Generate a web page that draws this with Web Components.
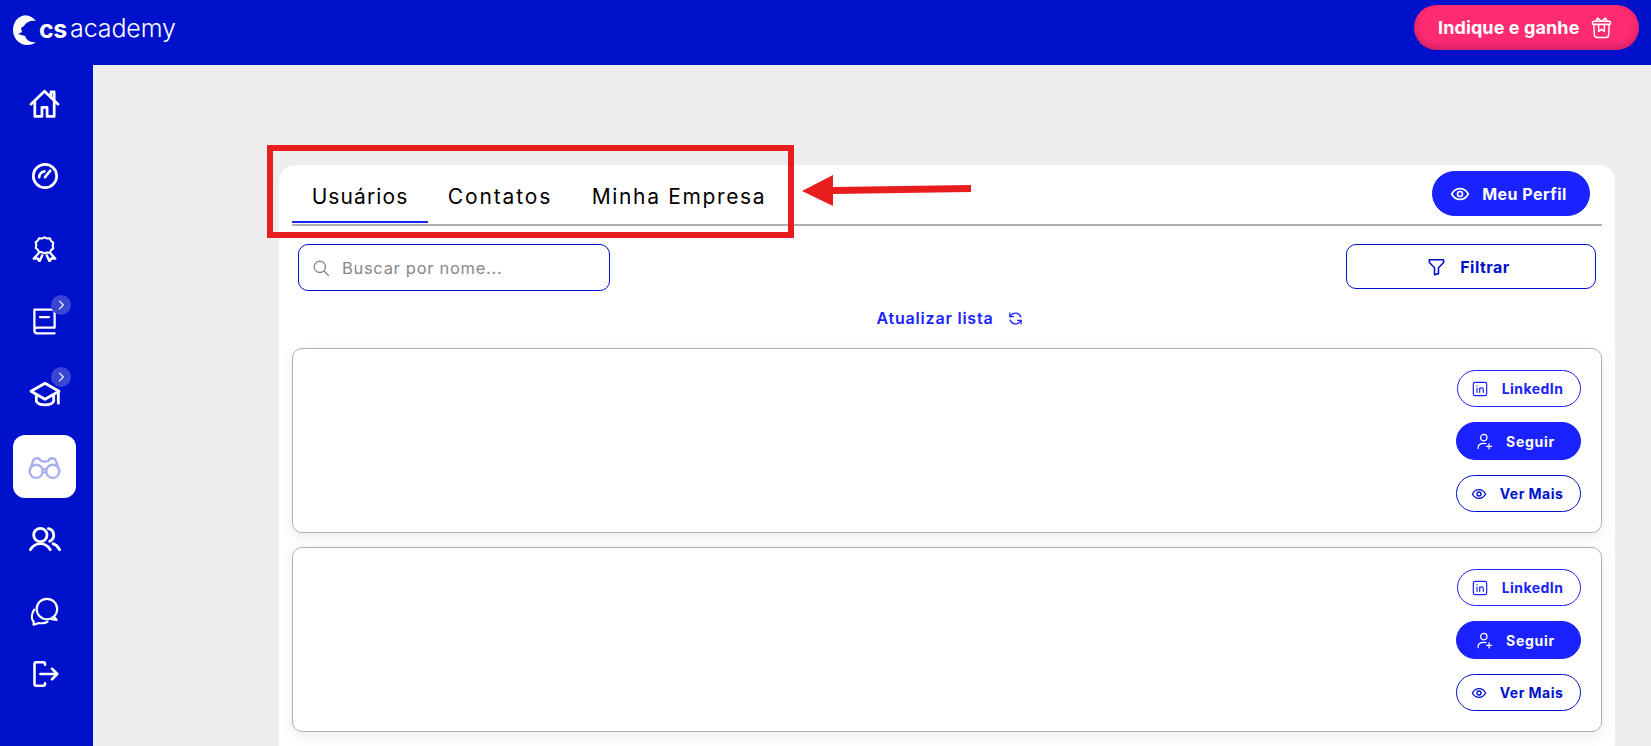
<!DOCTYPE html>
<html lang="pt-BR">
<head>
<meta charset="utf-8">
<title>CS Academy</title>
<style>
  html, body { margin: 0; height: 100%; overflow: hidden; background: #eee; font-family: Inter, "Noto Sans", sans-serif; }
</style>
</head>
<body>
<app-shell>
  <top-bar slot="top"></top-bar>
  <side-bar slot="side"></side-bar>
  <network-panel></network-panel>
</app-shell>
<arrow-note></arrow-note>

<script>
'use strict'

// shared icon paths, all drawn on a 24 box
const ICONS = {
  home: '<path d="M1.5 12.5 12 2.5l10.5 10"/><path d="M17 7V3h2.5v6.5"/><path d="M4.5 10.5V22h5.5v-7h4v7h5.5V10.5"/>',
  gauge: '<circle cx="12" cy="12" r="10"/><path d="M12 13l4.5-5.5"/><path d="M7 13a5.2 5.2 0 0 1 4.5-5"/>',
  ribbon: '<path d="M12 2l2.6 1.2 2.8-.2 1.2 2.6 2.2 1.8-.6 2.8.6 2.8-2.2 1.8-1.2 2.6-2.8-.2L12 18l-2.6-1.2-2.8.2-1.2-2.6L3.2 12.600l.6-2.800-.6-2.800 2.200-1.800L6.600 3l2.800.2z" transform="translate(1.300 .3) scale(.89)"/><path d="M6.500 16.500 2.500 21l3.500-.2 1.500 2.700 2.500-5.500"/><path d="M17.500 16.500l4 4.500-3.500-.2-1.500 2.700-2.500-5.500"/>',
  book: '<path d="M3 20V1.500h18V17.500H5.500a2.500 2.500 0 0 0 0 5H21"/><path d="M8 8h8"/>',
  grad: '<path d="M12 4 1.500 10 12 16l10.500-6z"/><path d="M5.500 12.500v5c2 3.500 11 3.500 13 0v-5"/><path d="M22 10v9"/>',
  binoculars: '<circle cx="6" cy="15.500" r="4.800"/><circle cx="18" cy="15.500" r="4.800"/><circle cx="12" cy="15" r="1.300"/><path d="M1.200 15 3.500 8.500Q4 6 6.500 6 8.500 6 9 7.800 12 9 15 7.800 15.500 6 17.500 6 20 6 20.500 8.500L22.800 15"/>',
  people: '<circle cx="8.500" cy="9" r="5"/><path d="M1 20c2-3 4.500-4.500 7.500-4.500s5.500 1.500 7.500 4.500"/><path d="M14.500 4.200a5 5 0 0 1 1 9.500"/><path d="M18 15.500c2 .6 3.800 2.500 5 4.500"/>',
  chat: '<circle cx="14" cy="10" r="8.500"/><path d="M20 16.500l2 2.500-5-.8"/><path d="M3.500 10.500C1 14 1 18 3 20.500V23l4.500-1.500c2.500.500 5 .2 7-1"/>',
  logout: '<path d="M12 4V3.500A1.500 1.500 0 0 0 10.500 2H4.500A1.500 1.500 0 0 0 3 3.500v17A1.500 1.500 0 0 0 4.500 22h6a1.500 1.500 0 0 0 1.500-1.500V20"/><path d="M8 12h14"/><path d="M18 7.500 22.500 12 18 16.500"/>',
  gift: '<path d="M4 8.500h16l-.5 11a3 3 0 0 1-3 3h-9a3 3 0 0 1-3-3z"/><rect x="2.500" y="5.500" width="19" height="3.500" rx="1.700"/><path d="M9 9v7l3-2 3 2V9"/><path d="M6 5.500 8 2l4 3.500L16 2l2 3.500"/>',
  eye: '<path d="M2 12c2.500-4.500 6-6.500 10-6.500S19.500 7.500 22 12c-2.500 4.500-6 6.500-10 6.500S4.500 16.500 2 12z"/><circle cx="12" cy="12" r="3"/>',
  search: '<circle cx="10.500" cy="10.500" r="7.500"/><path d="M16 16l6 6"/>',
  funnel: '<path d="M3 3.500h18v3.500l-6.500 6.500v7.500l-5 1.500v-9L3 7z"/>',
  refresh: '<path d="M20.500 9.500A9 9 0 0 0 5 6.500L3 9"/><path d="M3 3.500V9h5.500"/><path d="M3.500 14.500A9 9 0 0 0 19 17.500l2-2.500"/><path d="M21 20.500V15h-5.500"/>',
  linkedin: '<rect x="2" y="2" width="20" height="20" rx="2.500"/><path d="M7.500 10.500V17M7.500 6.800v.4M11.500 17v-6.500M11.500 13c0-3.500 5.500-3.500 5.500 0v4"/>',
  follow: '<circle cx="11" cy="6.500" r="4.500"/><path d="M3 22v-1.500c0-3.500 3-6 8-6 1 0 2 .1 3 .4"/><path d="M18.500 15.500v7M15 19h7"/>',
  chevron: '<path d="M9.500 5.500 16 12l-6.500 6.500"/>'
}

class CsIcon extends HTMLElement {
  connectedCallback() {
    const size = this.getAttribute('size') || 24
    const sw = this.getAttribute('stroke') || 2
    this.attachShadow({ mode: 'open' }).innerHTML = `
      <style>
        :host { display: inline-flex; width: ${size}px; height: ${size}px; flex: none; }
        svg { width: 100%; height: 100%; fill: none; stroke: currentColor; stroke-width: ${sw}; stroke-linecap: round; stroke-linejoin: round; }
      </style>
      <svg viewBox="0 0 24 24">${ICONS[this.getAttribute('name')]}</svg>`
  }
}

class AppShell extends HTMLElement {
  constructor() {
    super()
    this.attachShadow({ mode: 'open' }).innerHTML = `
      <style>
        :host { display: grid; grid-template: 65px 681px / 93px 1fr; height: 746px; overflow: hidden; }
        .top { grid-column: 1 / 3; }
        main { padding: 100px 36px 0 186px; min-width: 0; overflow: hidden; }
      </style>
      <div class="top"><slot name="top"></slot></div>
      <div><slot name="side"></slot></div>
      <main><slot></slot></main>`
  }
}

class TopBar extends HTMLElement {
  constructor() {
    super()
    this.attachShadow({ mode: 'open' }).innerHTML = `
      <style>
        :host { display: flex; height: 65px; background: #0011cc; align-items: center; justify-content: space-between; padding: 0 12px 0 13px; color: #fff; }
        .logo { display: flex; align-items: center; margin-top: -8px; }
        .logo svg { width: 24px; height: 30px; fill: #fff; margin-right: 2px; margin-top: 2px; }
        .cs { font-size: 25px; font-weight: 700; letter-spacing: -.5px; width: 31px; }
        .academy { font-size: 25px; font-weight: 300; letter-spacing: -.1px; margin-top: -2px; }
        .invite { display: flex; align-items: center; gap: 11px; box-sizing: border-box; width: 225px; height: 45px; margin-top: -10px; padding-left: 24px; border-radius: 23px; background: #ff2b72; box-shadow: inset 0 -4px 7px rgba(150, 20, 90, .45); font-size: 18px; font-weight: 650; letter-spacing: .1px; }
      </style>
      <div class="logo">
        <svg viewBox="13 13 24 30"><path d="M36 19C32 14 26 12 22 14 16 16 13 22 13 28c0 8 6 15 14 15 4 0 7-1 9-3-5 1-9-1-11-6l-7-2 4-2-1-4 3-2c2-4 7-6 12-5z"/></svg>
        <span class="cs">cs</span><span class="academy">academy</span>
      </div>
      <div class="invite">Indique e ganhe <cs-icon name="gift" size="23" stroke="1.500"></cs-icon></div>`
  }
}

class NavItem extends HTMLElement {
  constructor() {
    super()
    const active = this.hasAttribute('active')
    const badge = this.hasAttribute('badge') ? '<span class="badge"><cs-icon name="chevron" size="14" stroke="2"></cs-icon></span>' : ''
    this.attachShadow({ mode: 'open' }).innerHTML = `
      <style>
        :host { display: flex; position: relative; width: 63px; height: 63px; align-items: center; justify-content: center; border-radius: 12px; color: #fff; ${active ? 'background: #fff; color: #a9b0ee;' : ''} }
        .badge { position: absolute; top: 5px; right: 5px; width: 20px; height: 20px; border-radius: 50%; background: #3a45d2; display: flex; align-items: center; justify-content: center; color: #fff; }
      </style>
      <cs-icon name="${this.getAttribute('icon')}" size="${this.getAttribute('size') || 30}" stroke="${this.getAttribute('stroke') || 2.100}"></cs-icon>${badge}`
  }
}

class SideBar extends HTMLElement {
  constructor() {
    super()
    this.attachShadow({ mode: 'open' }).innerHTML = `
      <style>
        :host { display: flex; flex-direction: column; align-items: flex-start; gap: 9.600px; box-sizing: border-box; width: 93px; height: 681px; padding: 7px 0 0 13px; background: #0011cc; }
        .last { margin-top: -10px; }
      </style>
      <nav-item icon="home" size="31"></nav-item>
      <nav-item icon="gauge" size="28" stroke="2.300"></nav-item>
      <nav-item icon="ribbon" size="27"></nav-item>
      <nav-item icon="book" size="27" stroke="2" badge></nav-item>
      <nav-item icon="grad" size="32" badge></nav-item>
      <nav-item icon="binoculars" size="33" stroke="1.700" active></nav-item>
      <nav-item icon="people" size="32" stroke="2.100"></nav-item>
      <nav-item icon="chat" size="29" stroke="1.800"></nav-item>
      <nav-item icon="logout" size="28" stroke="2.200" class="last"></nav-item>`
  }
}

class PillButton extends HTMLElement {
  constructor() {
    super()
    const icon = this.getAttribute('icon')
    const gap = this.getAttribute('gap') || 14
    const size = this.getAttribute('size') || 16
    this.attachShadow({ mode: 'open' }).innerHTML = `
      <style>
        :host { display: flex; align-items: center; justify-content: center; box-sizing: border-box; gap: ${gap}px; padding-right: 3px; border: 1px solid #0011cc; border-radius: 20px; background: #fff; color: #0011cc; font-size: 14px; font-weight: 650; letter-spacing: .45px; white-space: nowrap; }
        :host([solid]) { background: #1a22ff; border-color: #1a22ff; color: #fff; }
        :host([link]) { color: #1a22ff; border-color: #1a22ff; }
      </style>
      <cs-icon name="${icon}" size="${size}" stroke="${this.getAttribute('stroke') || 2}"></cs-icon><slot></slot>`
  }
}

class TabBar extends HTMLElement {
  constructor() {
    super()
    this.attachShadow({ mode: 'open' }).innerHTML = `
      <style>
        :host { display: flex; align-items: flex-end; justify-content: space-between; box-sizing: border-box; height: 61px; padding-right: 12px; border-bottom: 2px solid #b0b0b0; }
        .tabs { display: flex; height: 49px; margin-bottom: 1px; }
        .tab { display: flex; align-items: center; justify-content: center; box-sizing: border-box; height: 100%; font-size: 21px; color: #000; padding-bottom: 4px; }
        .on { border-bottom: 2px solid #1a22ff; padding-bottom: 2px; }
        .me { width: 158px; height: 45px; margin-bottom: 8px; border-radius: 23px; font-size: 16px; padding-right: 5px; }
      </style>
      <div class="tabs">
        <div class="tab on" style="width:136px;letter-spacing:1.100px">Usuários</div>
        <div class="tab" style="width:144px;letter-spacing:1.900px">Contatos</div>
        <div class="tab" style="width:214px;letter-spacing:1.650px">Minha Empresa</div>
      </div>
      <pill-button class="me" icon="eye" size="20" gap="12" solid>Meu Perfil</pill-button>`
  }
}

class SearchBar extends HTMLElement {
  constructor() {
    super()
    this.attachShadow({ mode: 'open' }).innerHTML = `
      <style>
        :host { display: flex; justify-content: space-between; align-items: flex-start; padding: 18px 6px 0; }
        .search { display: flex; align-items: center; gap: 12px; box-sizing: border-box; width: 312px; height: 47px; padding-left: 13px; border: 1px solid #0011cc; border-radius: 10px; color: #888; font-size: 16.500px; letter-spacing: .7px; }
        .filter { width: 250px; height: 45px; border-radius: 10px; font-size: 16px; padding-right: 5px; }
      </style>
      <div class="search"><cs-icon name="search" size="18" stroke="1.800"></cs-icon>Buscar por nome...</div>
      <pill-button class="filter" icon="funnel" size="19" gap="14">Filtrar</pill-button>`
  }
}

class UserCard extends HTMLElement {
  constructor() {
    super()
    this.attachShadow({ mode: 'open' }).innerHTML = `
      <style>
        :host { display: flex; flex-direction: column; align-items: flex-end; gap: 15px; box-sizing: border-box; height: 185px; padding: 21px 20px 0 0; border: 1px solid #b0b0b0; border-radius: 10px; background: #fff; box-shadow: 0 4px 14px rgba(0, 0, 0, .08); }
        pill-button { width: 125px; height: 37px; }
        .li { width: 124px; }
        .solid { height: 38px; padding-right: 6px; letter-spacing: .7px; }
      </style>
      <pill-button class="li" icon="linkedin" size="16" gap="14" stroke="1.800" link>LinkedIn</pill-button>
      <pill-button class="solid" icon="follow" size="17" gap="13" stroke="1.800" solid>Seguir</pill-button>
      <pill-button icon="eye" size="16" gap="13">Ver Mais</pill-button>`
  }
}

class NetworkPanel extends HTMLElement {
  constructor() {
    super()
    this.attachShadow({ mode: 'open' }).innerHTML = `
      <style>
        :host { display: block; box-sizing: border-box; height: 640px; padding: 0 13px; background: #fff; border-radius: 16px 16px 0 0; }
        .refresh { display: flex; justify-content: center; align-items: center; gap: 15px; box-sizing: border-box; height: 57px; padding: 0 0 3px 6px; color: #1a22ff; font-size: 16px; font-weight: 600; letter-spacing: .8px; }
        .list { display: flex; flex-direction: column; gap: 14px; }
      </style>
      <tab-bar></tab-bar>
      <search-bar></search-bar>
      <div class="refresh">Atualizar lista <cs-icon name="refresh" size="15" stroke="2"></cs-icon></div>
      <div class="list"><user-card></user-card><user-card></user-card></div>`
  }
}

// red annotation drawn over the page
class ArrowNote extends HTMLElement {
  constructor() {
    super()
    this.attachShadow({ mode: 'open' }).innerHTML = `
      <style>
        :host { position: absolute; inset: 0; pointer-events: none; }
        .box { position: absolute; left: 267px; top: 145px; width: 527px; height: 93px; box-sizing: border-box; border: 6px solid #e81e1e; }
        svg { position: absolute; left: 800px; top: 170px; width: 175px; height: 40px; }
      </style>
      <div class="box"></div>
      <svg viewBox="800 170 175 40"><path fill="#e81e1e" d="M802 191 833 175v12l138-2v7l-138 2v12z"/></svg>`
  }
}

customElements.define('cs-icon', CsIcon)
customElements.define('app-shell', AppShell)
customElements.define('top-bar', TopBar)
customElements.define('nav-item', NavItem)
customElements.define('side-bar', SideBar)
customElements.define('pill-button', PillButton)
customElements.define('tab-bar', TabBar)
customElements.define('search-bar', SearchBar)
customElements.define('user-card', UserCard)
customElements.define('network-panel', NetworkPanel)
customElements.define('arrow-note', ArrowNote)
</script>
</body>
</html>
